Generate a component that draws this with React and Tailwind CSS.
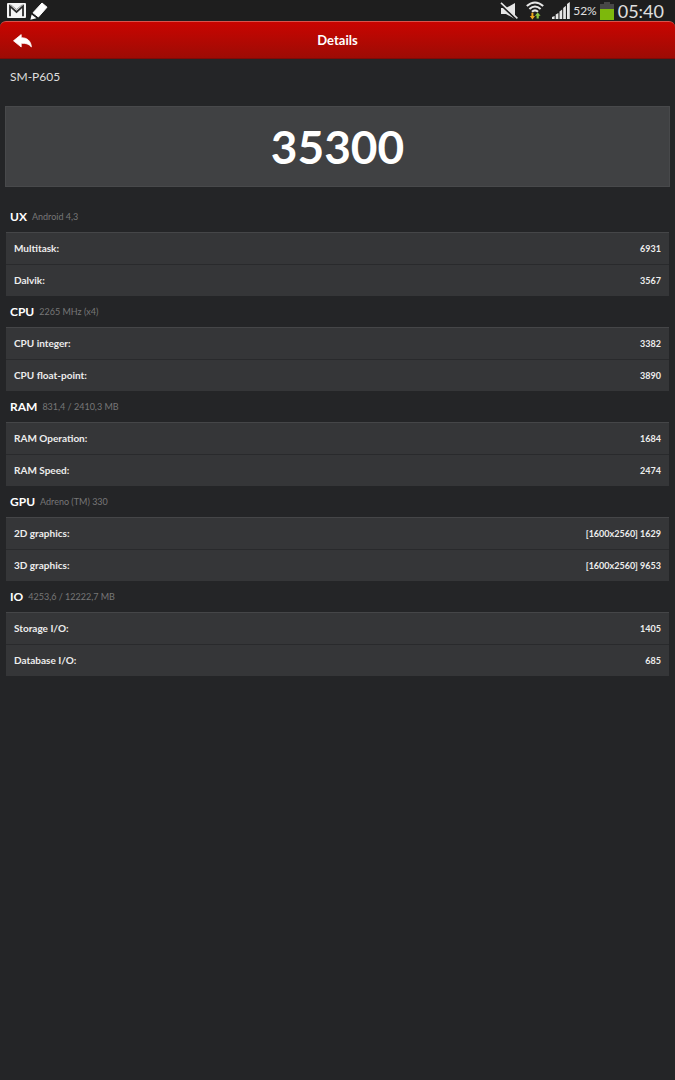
import React from 'react';

const SECTIONS = [
  {
    name: 'UX',
    info: 'Android 4,3',
    rows: [['Multitask:', '6931'], ['Dalvik:', '3567']],
  },
  {
    name: 'CPU',
    info: '2265 MHz (x4)',
    rows: [['CPU integer:', '3382'], ['CPU float-point:', '3890']],
  },
  {
    name: 'RAM',
    info: '831,4 / 2410,3 MB',
    rows: [['RAM Operation:', '1684'], ['RAM Speed:', '2474']],
  },
  {
    name: 'GPU',
    info: 'Adreno (TM) 330',
    rows: [['2D graphics:', '[1600x2560] 1629'], ['3D graphics:', '[1600x2560] 9653']],
  },
  {
    name: 'IO',
    info: '4253,6 / 12222,7 MB',
    rows: [['Storage I/O:', '1405'], ['Database I/O:', '685']],
  },
];

const MailIcon = () => (
  <svg width="19" height="15" viewBox="0 0 19 15" aria-hidden="true">
    <rect width="19" height="15" rx="1" fill="#f4f4f4" />
    <path d="M3 13.2V3.2L9.5 9L16 3.2V13.2" fill="none" stroke="#2a2a2a" strokeWidth="1.8" />
    <path d="M3.5 1.6L9.5 6.4L15.5 1.6" fill="none" stroke="#666" strokeWidth="0.6" />
  </svg>
);

const PenIcon = () => (
  <svg width="18" height="18" viewBox="0 0 18 18" aria-hidden="true">
    <path d="M12 1L17 5.2L8.4 15L3 10.8Z" fill="#fff" stroke="#fff" strokeLinejoin="round" />
    <path d="M1.6 12.4L6.4 16.2L0.4 17.8Z" fill="#fff" />
    <path d="M2 11.6L7.4 16" stroke="#222" strokeWidth="0.8" />
  </svg>
);

const MuteIcon = () => (
  <svg width="18" height="18" viewBox="0 0 18 18" aria-hidden="true">
    <path d="M1 6H6L15 1V17L6 12H1Z" fill="#e6e6e6" />
    <path d="M0 1.8L17 18" stroke="#1e1e1e" strokeWidth="2" />
    <path d="M1 0.8L17.4 16.4" stroke="#e6e6e6" strokeWidth="1.6" />
  </svg>
);

const WifiIcon = () => (
  <svg width="18" height="19" viewBox="0 0 18 19" aria-hidden="true">
    <g fill="none" stroke="#e8e8e8" strokeWidth="2.1">
      <path d="M0.8 5Q9 -2 17.2 5" />
      <path d="M3.4 8Q9 3 14.6 8" />
      <path d="M6 10.8Q9 8 12 10.8" />
    </g>
    <path d="M5.4 11.8H7.4V15H9L6.4 18.6L3.8 15H5.4Z" fill="#eea51c" />
    <path d="M10.6 17.5H12.8V14.8H14.6L11.7 11.4L8.9 14.8H10.6Z" fill="#8cc63f" />
  </svg>
);

const SignalIcon = () => (
  <svg width="18" height="17" viewBox="0 0 18 17" fill="#e8e8e8" aria-hidden="true">
    <path d="M0 15L2.6 14V17H0Z" />
    <path d="M3.7 12.5L6.4 11V17H3.7Z" />
    <path d="M7.5 9.5L10.2 7.5V17H7.5Z" />
    <path d="M11.2 6L13.9 3.8V17H11.2Z" />
    <path d="M15 2L17.8 0V17H15Z" />
  </svg>
);

const BatteryIcon = () => (
  <svg width="14" height="18" viewBox="0 0 14 18" aria-hidden="true">
    <path d="M4 0H10V2H14V18H0V2H4Z" fill="#474747" />
    <rect y="7" width="14" height="11" fill="#7db80c" />
  </svg>
);

const BackIcon = () => (
  <svg width="19" height="14" viewBox="0 0 19 14" fill="#fff" aria-hidden="true">
    <path d="M8.2 0.6V3.7C14.2 3.7 17.8 6.8 18.4 12.9C15.7 9.8 12.8 9.1 8.2 9.3V13L0.5 6.8Z" stroke="#fff" strokeWidth="0.8" strokeLinejoin="round" />
  </svg>
);

const StatusBar = () => (
  <div className="flex h-[21px] items-center justify-between bg-[#1e1e1e] pr-[11px] pl-[7px] text-[#e0e0e0]">
    <div className="flex items-center gap-1">
      <MailIcon />
      <PenIcon />
    </div>
    <div className="flex items-center">
      <div className="flex items-center gap-2">
        <MuteIcon />
        <WifiIcon />
        <SignalIcon />
      </div>
      <span className="ml-[3px] text-xs">52%</span>
      <div className="mr-1 ml-[3px]">
        <BatteryIcon />
      </div>
      <span className="text-lg leading-5">05:40</span>
    </div>
  </div>
);

const Section = ({ name, info, rows }) => (
  <section>
    <h2 className="flex h-[31px] items-center gap-[5px] px-1 text-xs font-bold text-white">
      {name}
      <span className="text-[9px] font-normal text-[#777777]">{info}</span>
    </h2>
    <table className="w-full border-separate border-spacing-0 bg-[#353638] text-[10px] font-bold text-[#ededed]">
      <tbody>
        {rows.map(([label, value]) => (
          <tr key={label} className="group h-8">
            <th scope="row" className="border-t border-[#292a2c] p-0 pl-2 text-left font-bold group-first:border-[#454648]">
              {label}
            </th>
            <td className="border-t border-[#292a2c] p-0 pr-2 text-right text-[9px] group-first:border-[#454648]">
              {value}
            </td>
          </tr>
        ))}
      </tbody>
    </table>
  </section>
);

const App = () => {
  return (
    <div className="min-h-screen bg-[#242527] font-['Choco_cooky',Lato,sans-serif] text-white">
      <StatusBar />

      <div className="bg-[#1e1e1e]">
        <header className="grid h-[38px] grid-cols-3 items-center rounded-t-md border-t border-b border-t-[#d9534b] border-b-[#7d0b08] bg-linear-to-b from-[#c90400] to-[#9d0b05] px-[13px] pt-px">
          <button type="button" aria-label="Back" className="justify-self-start">
            <BackIcon />
          </button>
          <h1 className="text-center text-[13px] font-bold">Details</h1>
        </header>
      </div>

      <main>
        <p className="px-[10px] pt-2 text-xs leading-5 text-[#dedede]">SM-P605</p>

        <div className="mx-[5px] mt-[19px] flex h-[81px] items-center justify-center border border-[#48494b] bg-[#404143]">
          <strong className="text-[46px] leading-none font-bold">35300</strong>
        </div>

        <div className="mx-[6px] mt-[14px]">
          {SECTIONS.map((section) => (
            <Section key={section.name} {...section} />
          ))}
        </div>
      </main>
    </div>
  );
};

export default App;
